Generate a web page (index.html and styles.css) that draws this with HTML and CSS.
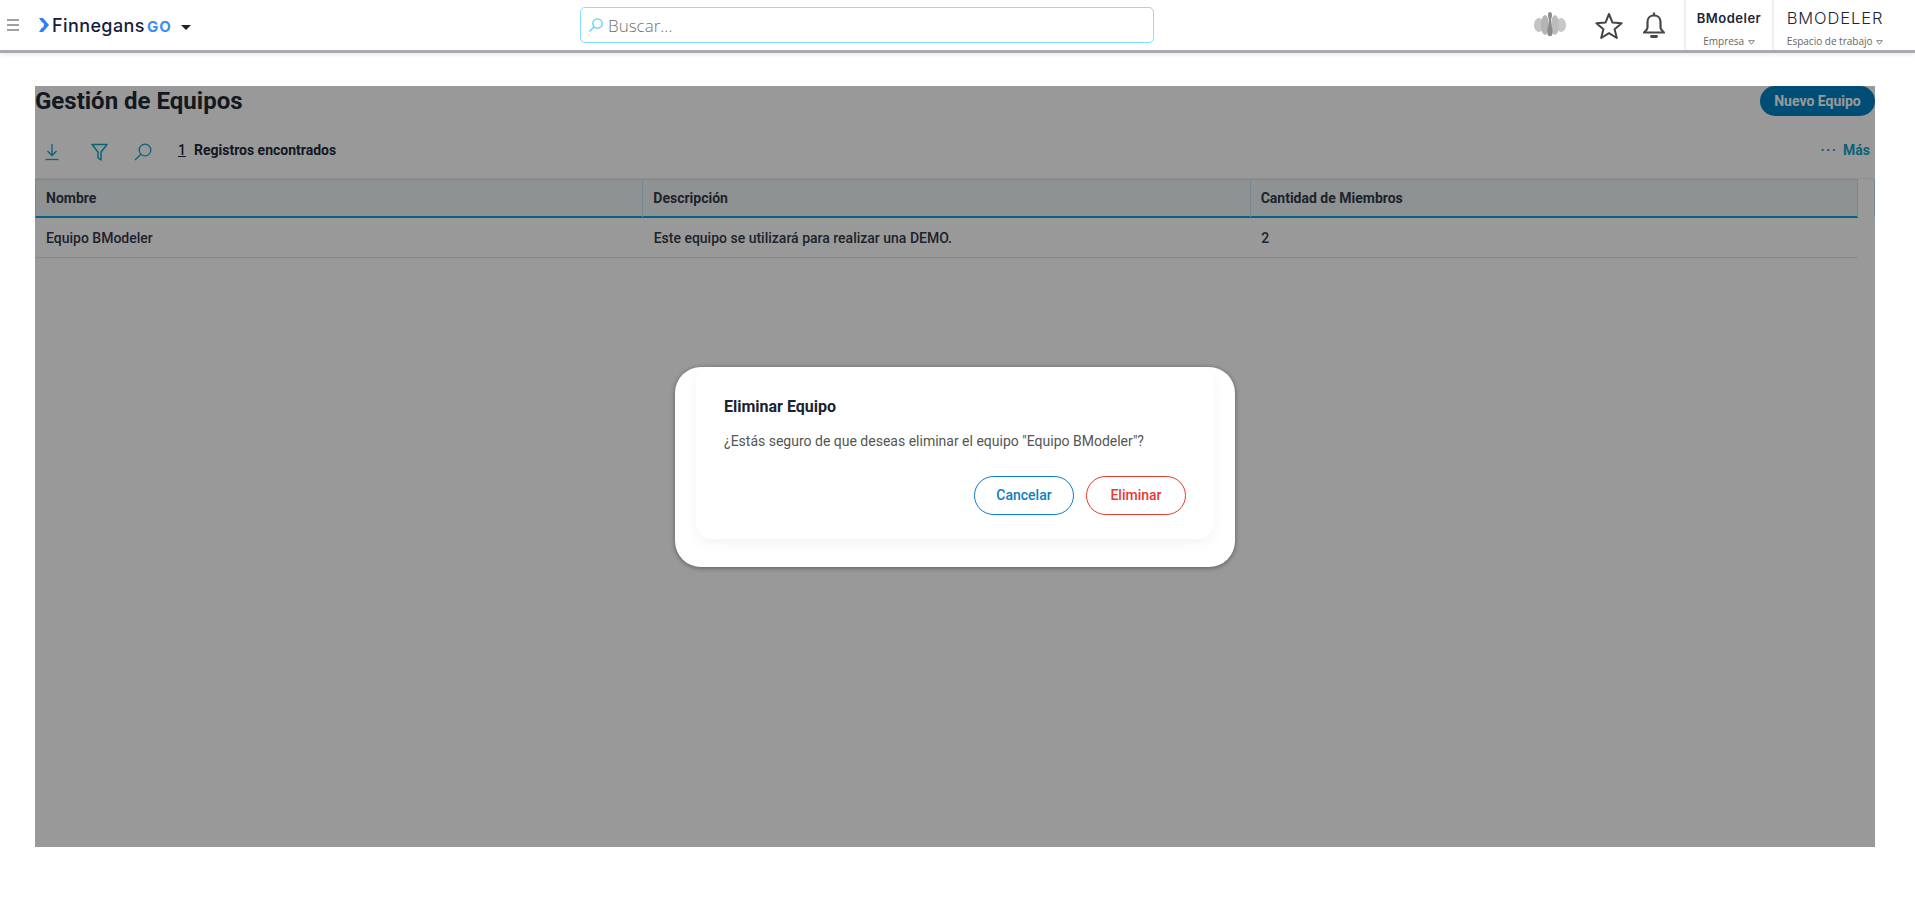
FILE: index.html
```html
<!DOCTYPE html>
<html lang="es">
<head>
  <meta charset="UTF-8" />
  <title>Gestión de Equipos</title>
  <link rel="stylesheet" href="styles.css">
</head>
<body>

  <header class="topbar">
    <div class="topbar-left">
      <div class="burger"><span></span><span></span><span></span></div>
      <div class="logo">
        <svg class="logo-mark" width="10" height="14" viewBox="0 0 10 14">
          <path d="M0 0h4l6 7-6 7H0l2.600-3.900a3.200 3.200 0 0 0 0-6.200z" fill="#2f80f0"/>
        </svg>
        <span class="logo-name">Finnegans</span>
        <span class="logo-go">GO</span>
      </div>
      <span class="logo-caret"></span>
    </div>

    <div class="search">
      <svg width="16" height="16" viewBox="0 0 16 16" fill="none" stroke="#4fd2f5" stroke-width="1.3">
        <circle cx="9.5" cy="6.5" r="4.7"/>
        <path d="M6 10l-4.500 4.500"/>
      </svg>
      <span class="search-text">Buscar...</span>
    </div>

    <div class="topbar-right">
      <svg class="brand-mark" width="34" height="28" viewBox="0 0 34 28">
        <ellipse cx="6" cy="14" rx="5" ry="7" fill="#c4c4c4"/>
        <ellipse cx="12" cy="14" rx="4" ry="10" fill="#b4b4b4"/>
        <ellipse cx="28" cy="14" rx="5" ry="7" fill="#c8c8c8"/>
        <ellipse cx="22" cy="14" rx="4" ry="10" fill="#bcbcbc"/>
        <path d="M17 1c2 0 2.500 3 1.500 6-.7 2-.7 4 0 7s1.500 6 1 9c-.4 3-4.600 3-5 0-.5-3 .3-6 1-9s.7-5 0-7c-1-3-.5-6 1.500-6z" fill="#8a8a8a"/>
      </svg>
      <svg class="star" width="28" height="27" viewBox="0 0 28 27" fill="none" stroke="#444" stroke-width="2" stroke-linejoin="round">
        <path d="M14 2l3.500 8.600 9.100.7-7 5.900 2.200 8.800L14 21.200 6.200 26l2.200-8.800-7-5.900 9.100-.7z"/>
      </svg>
      <svg class="bell" width="22" height="27" viewBox="0 0 22 27" fill="none" stroke="#484848" stroke-width="2.200">
        <path d="M11 3.500c-4.300 0-6.500 3-6.500 6.500v5.500c0 2-2 3.500-3.500 5h20c-1.500-1.500-3.500-3-3.500-5V10c0-3.500-2.200-6.500-6.500-6.500z" stroke-linejoin="round"/>
        <path d="M11 .5v3"/>
        <path d="M8.500 24.500h5" stroke-width="2.800" stroke-linecap="round"/>
      </svg>
      <div class="account account-company">
        <span class="account-name">BModeler</span>
        <span class="account-label">Empresa
          <svg class="mini-arrow" width="7" height="5" viewBox="0 0 7 5"><path d="M.7.6h5.600L3.500 4.300z" fill="none" stroke="#777" stroke-width=".9"/></svg>
        </span>
      </div>
      <div class="account account-space">
        <span class="account-name-big">BMODELER</span>
        <span class="account-label">Espacio de trabajo
          <svg class="mini-arrow" width="7" height="5" viewBox="0 0 7 5"><path d="M.7.6h5.600L3.500 4.300z" fill="none" stroke="#777" stroke-width=".9"/></svg>
        </span>
      </div>
    </div>
  </header>

  <main class="panel">
    <div class="title-row">
      <h1>Gestión de Equipos</h1>
      <button class="btn-new">Nuevo Equipo</button>
    </div>

    <div class="toolbar">
      <svg class="tool-download" width="16" height="18" viewBox="0 0 16 18" fill="none" stroke="#12a5c4" stroke-width="1.300">
        <path d="M8 1v11M3.500 8L8 12.500 12.500 8"/>
        <path d="M1.500 16.500h13"/>
      </svg>
      <svg class="tool-filter" width="17" height="18" viewBox="0 0 17 18" fill="none" stroke="#12a5c4" stroke-width="1.500" stroke-linejoin="round">
        <path d="M1 1.500h15L10 9v8l-3-2V9z"/>
      </svg>
      <svg class="tool-search" width="18" height="18" viewBox="0 0 18 18" fill="none" stroke="#12a5c4" stroke-width="1.300">
        <circle cx="11" cy="7" r="5.800"/>
        <path d="M6.800 11.200L1 17"/>
      </svg>
      <span class="count">1</span>
      <span class="count-label">Registros encontrados</span>
      <div class="more"><span class="more-dots">···</span> Más</div>
    </div>

    <div class="table-head">
      <div class="table-head-cols">
        <div class="th">Nombre</div>
        <div class="th">Descripción</div>
        <div class="th">Cantidad de Miembros</div>
      </div>
      <div class="table-head-filler"></div>
    </div>
    <div class="table-row">
      <div class="td">Equipo BModeler</div>
      <div class="td">Este equipo se utilizará para realizar una DEMO.</div>
      <div class="td">2</div>
    </div>

    <div class="overlay">
      <div class="dialog">
        <div class="dialog-card">
          <h2>Eliminar Equipo</h2>
          <p>¿Estás seguro de que deseas eliminar el equipo "Equipo BModeler"?</p>
          <div class="dialog-actions">
            <button class="btn-outline btn-cancel">Cancelar</button>
            <button class="btn-outline btn-delete">Eliminar</button>
          </div>
        </div>
      </div>
    </div>
  </main>

</body>
</html>
```

FILE: styles.css
```css
* {
  box-sizing: border-box;
}

html, body {
  margin: 0;
  padding: 0;
  height: 100%;
  overflow: hidden;
}

body {
  font-family: 'Roboto', sans-serif;
  background: #fff;
  color: #1e2a38;
}

.topbar {
  height: 53px;
  display: grid;
  grid-template-columns: 580px 574px 1fr;
  background: #fff;
  border-bottom: 3px solid #a9a9b1;
  box-shadow: 0 2px 4px rgba(0,0,0,0.08);
}

.topbar-left {
  display: flex;
  align-items: center;
  height: 50px;
  padding-left: 7px;
}

.burger {
  width: 12px;
  display: flex;
  flex-direction: column;
  gap: 3px;
}

.burger span {
  height: 2px;
  background: #a0a0a0;
}

.logo {
  display: flex;
  align-items: center;
  margin-left: 20px;
}

.logo-name {
  font-family: 'Inter', sans-serif;
  font-weight: 500;
  font-size: 18px;
  letter-spacing: 0.4px;
  color: #14203a;
  margin-left: 3px;
}

.logo-go {
  font-family: 'Inter', sans-serif;
  font-weight: 700;
  font-size: 15px;
  letter-spacing: 1px;
  color: #3f8cf5;
  margin-left: 2px;
  margin-top: 2px;
}

.logo-caret {
  margin-left: 9px;
  margin-top: 4px;
  border-left: 5px solid transparent;
  border-right: 5px solid transparent;
  border-top: 5px solid #222;
}

.search {
  margin-top: 7px;
  height: 36px;
  display: flex;
  align-items: center;
  gap: 4px;
  padding-left: 7px;
  border: 1px solid #7fe3fb;
  border-radius: 5px;
  background: #fff;
}

.search-text {
  font-family: 'Open Sans', sans-serif;
  font-weight: 300;
  font-size: 17px;
  color: #707070;
}

.topbar-right {
  display: flex;
  align-items: center;
  height: 50px;
  padding-left: 379px;
}

.star {
  margin-left: 28px;
}

.bell {
  margin-left: 20px;
}

.account {
  height: 50px;
  display: flex;
  flex-direction: column;
  align-items: center;
  padding-top: 9px;
  border-left: 2px solid #efefef;
}

.account-company {
  margin-left: 19px;
  width: 88px;
}

.account-space {
  width: 124px;
}

.account-name {
  font-family: 'Inter', sans-serif;
  font-weight: 600;
  font-size: 13px;
  letter-spacing: 0.5px;
  line-height: 18px;
  color: #1c2636;
}

.account-name-big {
  font-family: 'Inter', sans-serif;
  font-weight: 300;
  font-size: 16.5px;
  letter-spacing: 0.9px;
  line-height: 18px;
  color: #1c2636;
}

.account-label {
  font-family: 'Open Sans', sans-serif;
  font-size: 10px;
  line-height: 14px;
  margin-top: 7px;
  color: #666;
}

.mini-arrow {
  margin-left: 1px;
  vertical-align: 0;
}

.panel {
  position: relative;
  margin: 33px 40px 0 35px;
  height: 761px;
}

.title-row {
  height: 30px;
  display: flex;
  justify-content: space-between;
  align-items: center;
}

h1 {
  margin: 0;
  font-size: 24px;
  font-weight: 700;
  color: #1e2a38;
}

.btn-new {
  width: 115px;
  height: 30px;
  border: none;
  border-radius: 15px;
  background: #0083c4;
  color: #fff;
  font-family: 'Roboto', sans-serif;
  font-size: 14px;
  font-weight: 700;
}

.toolbar {
  height: 62px;
  padding-top: 6px;
  display: flex;
  align-items: center;
  color: #1e2a38;
}

.toolbar svg {
  margin-top: 4px;
}

.tool-download {
  margin-left: 9px;
}

.tool-filter {
  margin-left: 31px;
}

.tool-search {
  margin-left: 26px;
}

.count {
  margin-left: 26px;
  font-size: 14px;
  font-weight: 500;
  text-decoration: underline;
}

.count-label {
  margin-left: 8px;
  font-size: 14px;
  font-weight: 700;
}

.more {
  margin-left: auto;
  padding-right: 5px;
  font-size: 14px;
  font-weight: 700;
  color: #12a5c4;
}

.more-dots {
  font-weight: 700;
  letter-spacing: 1.5px;
  margin-right: 2px;
}

.table-head {
  display: flex;
  height: 40px;
  border-top: 1px solid #f0f0f0;
}

.table-head-cols {
  flex: 1;
  margin-right: 16px;
  display: grid;
  grid-template-columns: repeat(3, 1fr);
  background: #eef3f3;
  border-top: 1px solid #c5e2fb;
  border-bottom: 2px solid #0ea5d8;
  border-left: 1px solid #c5e2fb;
}

.table-head-filler {
  width: 1px;
  height: 37px;
  background: #c5e2fb;
}

.th {
  padding-left: 10px;
  font-size: 14px;
  font-weight: 700;
  line-height: 37px;
  color: #333a4a;
  border-right: 1px solid #c5e2fb;
}

.table-row {
  margin-right: 17px;
  height: 40px;
  display: grid;
  grid-template-columns: repeat(3, 1fr);
  border-bottom: 1px solid #e4e4e4;
}

.td {
  padding-left: 11px;
  font-size: 14px;
  font-weight: 500;
  line-height: 41px;
  color: #333a4a;
}

.overlay {
  position: absolute;
  inset: 0;
  display: flex;
  align-items: center;
  justify-content: center;
  background: rgba(0,0,0,0.4);
}

.dialog {
  width: 560px;
  height: 200px;
  padding: 0 21px;
  border-radius: 26px;
  background: #fff;
  box-shadow: 0 1px 5px rgba(0,0,0,0.4);
}

.dialog-card {
  height: 172px;
  padding: 29px 28px 0;
  border-radius: 16px;
  background: #fff;
  box-shadow: 0 4px 14px rgba(0,0,0,0.05);
}

h2 {
  margin: 0;
  font-size: 16px;
  line-height: 22px;
  font-weight: 700;
  color: #1a2333;
}

.dialog-card p {
  margin: 13px 0 0;
  font-size: 14px;
  line-height: 20px;
  color: #555;
}

.dialog-actions {
  margin-top: 25px;
  display: flex;
  justify-content: flex-end;
  gap: 12px;
}

.btn-outline {
  width: 100px;
  height: 39px;
  border-radius: 20px;
  background: #fff;
  font-family: 'Roboto', sans-serif;
  font-size: 14px;
  font-weight: 500;
}

.btn-cancel {
  border: 1px solid #0a7fc0;
  color: #0a7fc0;
}

.btn-delete {
  border: 1px solid #e53935;
  color: #e53935;
}
```
